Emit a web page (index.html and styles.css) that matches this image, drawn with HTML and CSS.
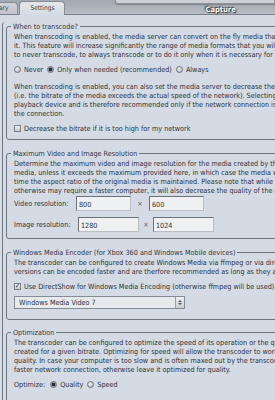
FILE: index.html
```html
<!DOCTYPE html>
<html lang="en">
<head>
  <meta charset="UTF-8" />
  <title>Settings - Transcoding</title>
  <link rel="stylesheet" href="styles.css">
</head>
<body>

<div class="top-bar">
  <div class="tabs">
    <div class="tab">Library</div>
    <div class="tab active">Settings</div>
  </div>
  <div class="mode-box">
    <div class="mode-strip"></div>
    <div class="mode-label">Capture</div>
  </div>
</div>

<div class="page">
  <div class="scroll">

    <fieldset>
      <legend>When to transcode?</legend>
      <p class="text">When transcoding is enabled, the media server can convert on the fly media that your device cannot play natively<br>
      it. This feature will increase significantly the range of media formats that you will be able to play. You can choose<br>
      to never transcode, to always transcode or to do it only when it is necessary for playback.</p>
      <div class="row">
        <span class="radio"></span><span class="opt">Never</span>
        <span class="radio on"></span><span class="opt">Only when needed (recommended)</span>
        <span class="radio"></span><span class="opt">Always</span>
      </div>
      <p class="text">When transcoding is enabled, you can also set the media server to decrease the bitrate when it is too high<br>
      (i.e. the bitrate of the media exceeds the actual speed of the network). Selecting this option may affect the<br>
      playback device and is therefore recommended only if the network connection is slow or often saturates<br>
      the connection.</p>
      <div class="row check-row">
        <span class="check"></span><span class="opt">Decrease the bitrate if it is too high for my network</span>
      </div>
    </fieldset>

    <fieldset>
      <legend>Maximum Video and Image Resolution</legend>
      <p class="text">Determine the maximum video and image resolution for the media created by the transcoder. The transcoded<br>
      media, unless it exceeds the maximum provided here, in which case the media will be scaled down. At the same<br>
      time the aspect ratio of the original media is maintained. Please note that while using a higher resolution<br>
      otherwise may require a faster computer, it will also decrease the quality of the output.</p>
      <div class="res-row">
        <span class="res-label">Video resolution:</span>
        <span class="field">800</span>
        <span class="times">×</span>
        <span class="field">600</span>
      </div>
      <div class="res-row image">
        <span class="res-label">Image resolution:</span>
        <span class="field">1280</span>
        <span class="times">×</span>
        <span class="field">1024</span>
      </div>
    </fieldset>

    <fieldset class="encoder">
      <legend>Windows Media Encoder (for Xbox 360 and Windows Mobile devices)</legend>
      <p class="text">The transcoder can be configured to create Windows Media via ffmpeg or via directshow. The directshow<br>
      versions can be encoded faster and are therfore recommended as long as they are available.</p>
      <div class="row check-row">
        <span class="check on">✓</span><span class="opt">Use DirectShow for Windows Media Encoding (otherwise ffmpeg will be used)</span>
      </div>
      <div class="select">
        <span class="select-text">Windows Media Video 7</span>
        <span class="spin"><i class="up"></i><i class="down"></i></span>
      </div>
    </fieldset>

    <fieldset class="last">
      <legend>Optimization</legend>
      <p class="text">The transcoder can be configured to optimize the speed of its operation or the quality of the media<br>
      created for a given bitrate. Optimizing for speed will allow the transcoder to work faster at the expense of<br>
      quality. In case your computer is too slow and is often maxed out by the transcoder, optimize for speed or use a<br>
      faster network connection, otherwise leave it optimized for quality.</p>
      <div class="row">
        <span class="opt lead">Optimize:</span>
        <span class="radio on"></span><span class="opt">Quality</span>
        <span class="radio"></span><span class="opt">Speed</span>
      </div>
    </fieldset>

  </div>
</div>

</body>
</html>
```

FILE: styles.css
```css
* { box-sizing: border-box; }

body {
  margin: 0;
  width: 275px;
  height: 400px;
  overflow: hidden;
  background: #d4dbe5;
  color: #2e3136;
  font-family: "DejaVu Sans Condensed", "DejaVu Sans", sans-serif;
  font-size: 7.2px;
  line-height: 9px;
}

/* top strip with tabs */
.top-bar {
  height: 15px;
  display: flex;
  background: linear-gradient(#a2a8af, #b8bdc4);
  border-bottom: 1px solid #7b8088;
}

.tabs {
  display: flex;
  align-items: flex-end;
  margin-left: -22px;
  gap: 1px;
}

.tab {
  height: 12px;
  padding: 0 9px;
  line-height: 11px;
  font-size: 6.5px;
  color: #3a3d42;
  background: linear-gradient(#cfd3d8, #c2c6cc);
  border: 1px solid #878c93;
  border-bottom: none;
  border-radius: 4px 4px 0 0;
}

.tab.active {
  height: 14px;
  line-height: 13px;
  padding: 0 10px;
  background: linear-gradient(#e4e7ea, #d4dbe5);
  margin-bottom: -1px;
}

.mode-box {
  flex: 1;
  margin-left: 50px;
  display: flex;
  flex-direction: column;
}

.mode-strip {
  height: 5px;
  background: #cdd0d4;
  border: 1px solid #8e939a;
  border-top: none;
  border-radius: 0 0 0 3px;
  box-shadow: 0 1px 1px rgba(0,0,0,0.25);
}

.mode-label {
  margin-left: 90px;
  margin-top: 1px;
  color: #fff;
  font-weight: bold;
  font-size: 7.5px;
  line-height: 9px;
  text-shadow: 0 0 1px #222, 1px 1px 1px #333, -1px -1px 1px #444;
}

/* content */
.page {
  padding-top: 7px;
  padding-left: 2px;
}

.scroll {
  width: 400px;
  border-left: 1px solid #707780;
  border-top-left-radius: 3px;
  padding: 0 0 0 3px;
}

fieldset {
  margin: 0 0 9px 0;
  padding: 0 7px 6px;
  border: 1px solid #6f757d;
  border-radius: 3px;
}

fieldset.encoder {
  padding-bottom: 10px;
  margin-bottom: 8px;
}

fieldset.last { padding-bottom: 20px; }

legend {
  padding: 0 2px;
  margin-left: -3px;
  color: #34373c;
}

.text {
  margin: 1px 0 0;
  white-space: nowrap;
}

.row {
  display: flex;
  align-items: center;
  height: 10px;
  margin: 5px 0 8px;
  white-space: nowrap;
}

.check-row {
  margin: 5px 0 0;
}

.opt { margin-right: 4px; }
.opt.lead { margin-right: 5px; }

.radio {
  width: 7px;
  height: 7px;
  border-radius: 50%;
  margin-right: 3px;
  border: 1px solid #6f747b;
  background: radial-gradient(circle at 40% 35%, #f0f2f4, #a7adb4);
}

.radio.on {
  background: radial-gradient(circle, #2b2e33 45%, #8a9098 55%, #c9ced4);
}

.check {
  width: 7px;
  height: 7px;
  margin-right: 3px;
  border: 1px solid #7c828a;
  background: linear-gradient(#f2f4f6, #c4c9cf);
  font-size: 7px;
  line-height: 5px;
  color: #2b2e33;
  text-align: center;
}

.res-row {
  display: flex;
  align-items: center;
  height: 15px;
  margin-top: 1px;
}

.res-row.image { margin-top: 6px; }

.res-label {
  width: 62px;
}

.res-row.image .res-label { width: 64px; }

.field {
  width: 55px;
  height: 15px;
  padding: 3px 2px;
  background: #eef0f2;
  border: 1px solid #b9bec5;
  border-top-color: #6c727a;
  border-left-color: #6c727a;
}

.res-row.image .field { width: 61px; }

.times {
  width: 18px;
  text-align: center;
  color: #666b72;
}

.res-row.image .times { width: 14px; }

.select {
  display: flex;
  width: 171px;
  height: 13px;
  margin-top: 5px;
  background: #e7eaed;
  border: 1px solid #858b93;
}

.select-text {
  flex: 1;
  padding: 1px 4px;
  line-height: 10px;
}

.spin {
  width: 9px;
  display: flex;
  flex-direction: column;
  align-items: center;
  justify-content: center;
  gap: 1px;
  border-left: 1px solid #9aa0a7;
  background: linear-gradient(#f0f2f4, #c7ccd2);
}

.spin i {
  width: 0;
  height: 0;
  border-left: 2px solid transparent;
  border-right: 2px solid transparent;
}

.spin .up { border-bottom: 2px solid #555a61; }
.spin .down { border-top: 2px solid #555a61; }
```
